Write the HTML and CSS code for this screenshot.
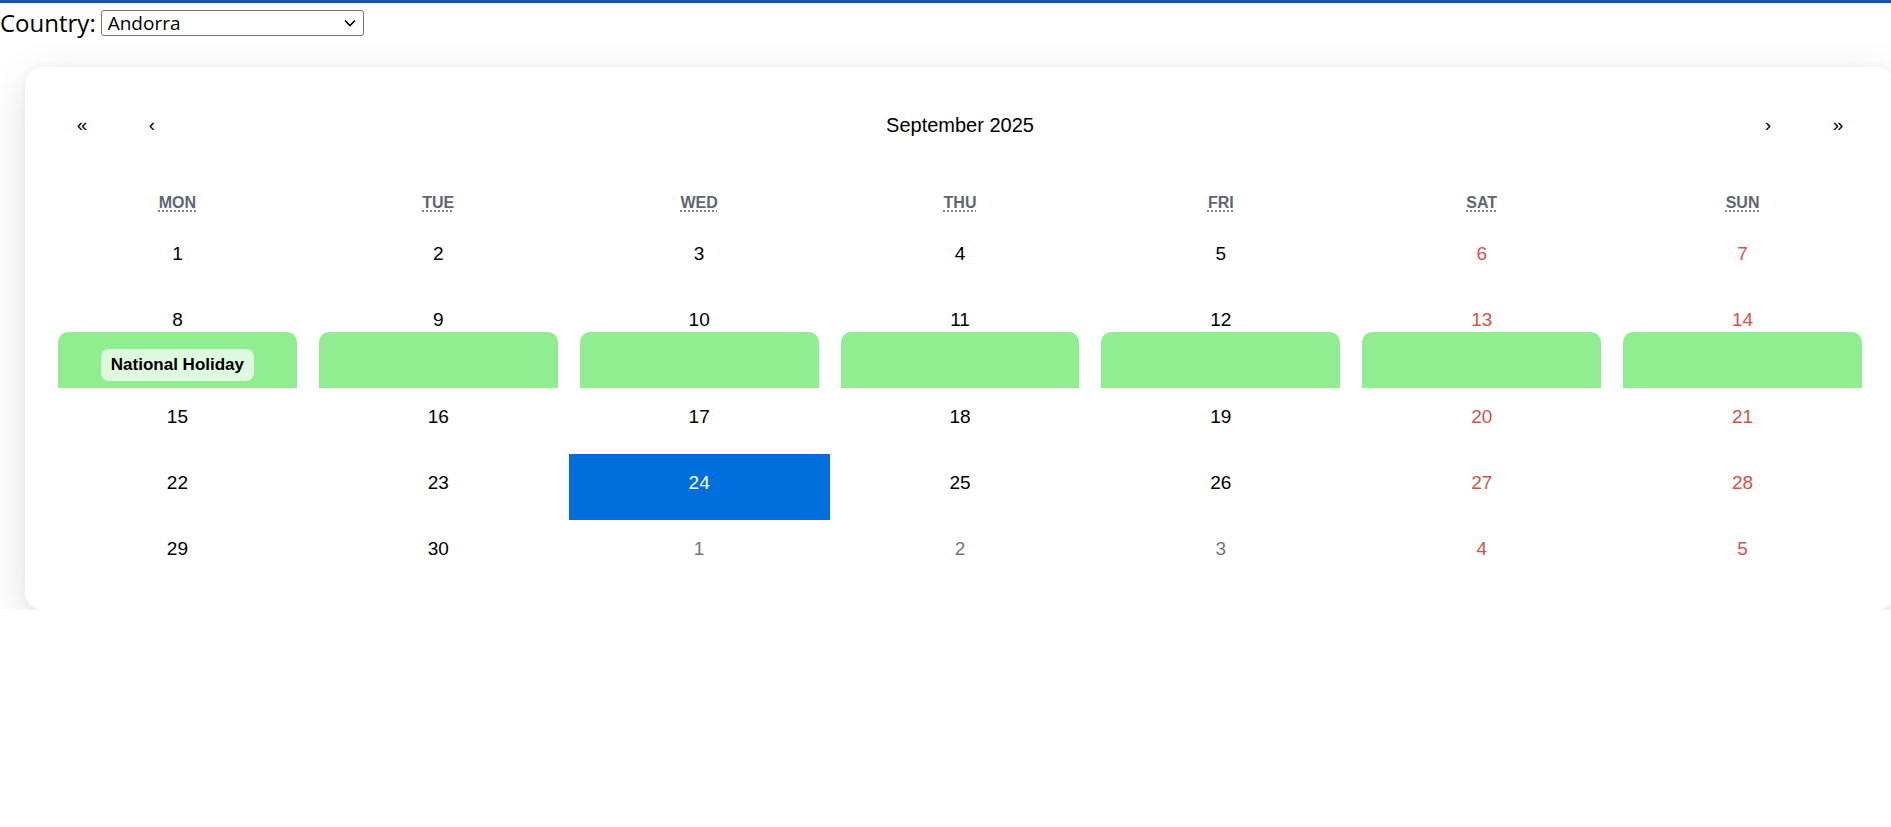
FILE: index.html
```html
<!DOCTYPE html>
<html lang="en">
<head>
<meta charset="utf-8">
<title>Holiday Calendar</title>
<link rel="stylesheet" href="styles.css">
</head>
<body>
<div class="topbar"></div>
<div class="country-row">
  <label class="country-label" for="country">Country:</label>
  <div class="select-wrap">
    <select id="country" class="country-select">
      <option>Andorra</option>
    </select>
    <svg class="select-chevron" width="12" height="8" viewBox="0 0 12 8" aria-hidden="true"><path d="M1 1.5 L6 6.5 L11 1.5" fill="none" stroke="#000" stroke-width="1.6"/></svg>
  </div>
</div>

<div class="card">
  <div class="nav">
    <button class="nav-btn">«</button>
    <button class="nav-btn">‹</button>
    <span class="nav-label">September 2025</span>
    <button class="nav-btn">›</button>
    <button class="nav-btn">»</button>
  </div>
  <div class="grid">
    <div class="wd"><abbr title="Monday">MON</abbr></div>
    <div class="wd"><abbr title="Tuesday">TUE</abbr></div>
    <div class="wd"><abbr title="Wednesday">WED</abbr></div>
    <div class="wd"><abbr title="Thursday">THU</abbr></div>
    <div class="wd"><abbr title="Friday">FRI</abbr></div>
    <div class="wd"><abbr title="Saturday">SAT</abbr></div>
    <div class="wd"><abbr title="Sunday">SUN</abbr></div>

    <div class="tile"><div class="num">1</div></div>
    <div class="tile"><div class="num">2</div></div>
    <div class="tile"><div class="num">3</div></div>
    <div class="tile"><div class="num">4</div></div>
    <div class="tile"><div class="num">5</div></div>
    <div class="tile weekend"><div class="num">6</div></div>
    <div class="tile weekend"><div class="num">7</div></div>

    <div class="tile"><div class="num">8</div><div class="event"><span class="event-pill">National Holiday</span></div></div>
    <div class="tile"><div class="num">9</div><div class="event"></div></div>
    <div class="tile"><div class="num">10</div><div class="event"></div></div>
    <div class="tile"><div class="num">11</div><div class="event"></div></div>
    <div class="tile"><div class="num">12</div><div class="event"></div></div>
    <div class="tile weekend"><div class="num">13</div><div class="event"></div></div>
    <div class="tile weekend"><div class="num">14</div><div class="event"></div></div>

    <div class="tile"><div class="num">15</div></div>
    <div class="tile"><div class="num">16</div></div>
    <div class="tile"><div class="num">17</div></div>
    <div class="tile"><div class="num">18</div></div>
    <div class="tile"><div class="num">19</div></div>
    <div class="tile weekend"><div class="num">20</div></div>
    <div class="tile weekend"><div class="num">21</div></div>

    <div class="tile"><div class="num">22</div></div>
    <div class="tile"><div class="num">23</div></div>
    <div class="tile active"><div class="num">24</div></div>
    <div class="tile"><div class="num">25</div></div>
    <div class="tile"><div class="num">26</div></div>
    <div class="tile weekend"><div class="num">27</div></div>
    <div class="tile weekend"><div class="num">28</div></div>

    <div class="tile"><div class="num">29</div></div>
    <div class="tile"><div class="num">30</div></div>
    <div class="tile neighbor"><div class="num">1</div></div>
    <div class="tile neighbor"><div class="num">2</div></div>
    <div class="tile neighbor"><div class="num">3</div></div>
    <div class="tile weekend"><div class="num">4</div></div>
    <div class="tile weekend"><div class="num">5</div></div>
  </div>
</div>
</body>
</html>
```

FILE: styles.css
```css
html, body {
  margin: 0;
  padding: 0;
  background: #ffffff;
  overflow: hidden;
}

body {
  font-family: "Liberation Sans", Arial, sans-serif;
  color: #000;
}

.topbar {
  height: 3px;
  background: #1b55a1;
}

.country-row {
  display: flex;
  align-items: center;
  gap: 5px;
  padding-top: 7px;
  height: 26px;
}

.country-label {
  font-family: "Open Sans", "Noto Sans", sans-serif;
  font-size: 24px;
  line-height: 26px;
  color: #000;
}

.select-wrap {
  position: relative;
  width: 263px;
  height: 26px;
}

.country-select {
  appearance: none;
  -webkit-appearance: none;
  box-sizing: border-box;
  width: 263px;
  height: 26px;
  margin: 0;
  padding: 0 0 0 6px;
  border: 1px solid #767676;
  border-radius: 3px;
  background: #fff;
  font-family: "Open Sans", "Noto Sans", sans-serif;
  font-size: 19px;
  line-height: 24px;
  color: #000;
}

.select-chevron {
  position: absolute;
  right: 8px;
  top: 9px;
  pointer-events: none;
}

.card {
  box-sizing: border-box;
  margin: 31px 0 0 25px;
  width: 1870px;
  padding: 22px 22px 24px;
  background: #fff;
  border-radius: 18px;
  box-shadow: 0 12px 40px rgba(0, 0, 0, 0.13), 0 0 8px rgba(0, 0, 0, 0.03);
}

.nav {
  display: flex;
  align-items: center;
  height: 72px;
  margin-bottom: 19px;
}

.nav-btn {
  width: 70px;
  height: 72px;
  border: 0;
  background: none;
  padding: 0;
  font-family: "Liberation Sans", Arial, sans-serif;
  font-size: 19px;
  color: #000;
}

.nav-label {
  flex: 1;
  text-align: center;
  font-size: 20px;
  color: #000;
}

.grid {
  display: grid;
  grid-template-columns: repeat(7, 1fr);
}

.wd {
  height: 45px;
  display: flex;
  align-items: center;
  justify-content: center;
  font-size: 16px;
  font-weight: bold;
  color: #5f6670;
}

.wd abbr {
  text-decoration: underline dotted;
  text-underline-offset: 3px;
}

.tile {
  box-sizing: border-box;
  min-height: 66px;
  padding-top: 19px;
  text-align: center;
  font-size: 19px;
  color: #000;
}

.num {
  line-height: 19px;
}

.tile.weekend {
  color: #d8504a;
}

.tile.neighbor {
  color: #757575;
}

.tile.active {
  background: #006edc;
  color: #fff;
}

.event {
  margin: 3px 11px 0;
  height: 56px;
  background: #90ee90;
  border-radius: 10px 10px 0 0;
  display: flex;
  justify-content: center;
  padding-top: 17px;
  box-sizing: border-box;
}

.event-pill {
  display: inline-block;
  height: 32px;
  line-height: 32px;
  padding: 0 10px;
  border-radius: 8px;
  background: rgba(255, 255, 255, 0.7);
  font-size: 17px;
  font-weight: bold;
  color: #000;
}
```
